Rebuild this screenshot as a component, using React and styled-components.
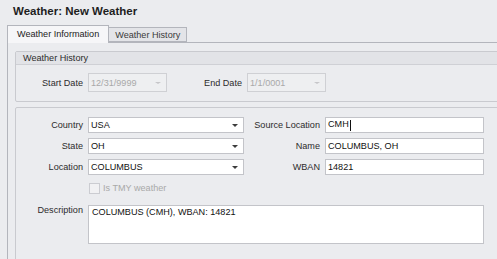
import styled, { createGlobalStyle } from "styled-components";

const GlobalStyle = createGlobalStyle`
  body {
    margin: 0;
    background: #ebecef;
    overflow: hidden;
    font-family: "Liberation Sans", Arial, sans-serif;
    font-size: 9.1px;
    color: #2b2b2b;
  }
`;

const Page = styled.div`
  width: 520px;
  height: 259px;
  overflow: hidden;
`;

const Title = styled.div`
  height: 25px;
  box-sizing: border-box;
  padding: 4px 0 0 13px;
  line-height: 14px;
  font-size: 11.5px;
  font-weight: bold;
  color: #1e1e1e;
`;

const TabStrip = styled.div`
  display: flex;
  align-items: flex-end;
  height: 17px;
  padding-left: 7px;
  position: relative;
  z-index: 1;
`;

const Tab = styled.div`
  box-sizing: border-box;
  height: ${(p) => (p.$active ? "18px" : "15px")};
  margin-bottom: ${(p) => (p.$active ? "-1px" : "0")};
  padding: 0 ${(p) => (p.$active ? "9px" : "6px")};
  line-height: ${(p) => (p.$active ? "16px" : "14px")};
  border: 1px solid #b3b5bc;
  border-bottom: ${(p) => (p.$active ? "none" : "1px solid #b3b5bc")};
  border-left: ${(p) => (p.$active ? "1px solid #b3b5bc" : "none")};
  background: ${(p) => (p.$active ? "#f6f6f8" : "#e3e4e8")};
  color: ${(p) => (p.$active ? "#222" : "#3a3a3a")};
  white-space: nowrap;
`;

const TabPanel = styled.div`
  margin-left: 7px;
  border-left: 1px solid #b3b5bc;
  border-top: 1px solid #b3b5bc;
  padding: 8px 0 0 7px;
  height: 260px;
`;

const Group = styled.div`
  border: 1px solid #c9cacf;
  border-radius: 2px;
  margin-bottom: 5px;
`;

const GroupHeader = styled.div`
  height: 12px;
  line-height: 12px;
  padding-left: 7px;
  background: #e2e3e7;
  border-bottom: 1px solid #cfd0d5;
  color: #2b2b2b;
`;

const DateRow = styled.div`
  display: grid;
  grid-template-columns: 67px 79px 70px 79px;
  column-gap: 5px;
  align-items: center;
  padding: 8px 0 9px;
`;

const FieldGrid = styled.div`
  display: grid;
  grid-template-columns: 67px 156px 71px 159px;
  grid-auto-rows: 16px;
  column-gap: 5px;
  row-gap: 5px;
  padding: 9px 0 40px;
`;

const Label = styled.div`
  text-align: right;
  white-space: nowrap;
  align-self: ${(p) => (p.$top ? "start" : "center")};
  padding-top: ${(p) => (p.$top ? "4px" : "0")};
  color: #2b2b2b;
`;

const Box = styled.div`
  box-sizing: border-box;
  height: ${(p) => (p.$tall ? "19px" : "16px")};
  border: 1px solid ${(p) => (p.$disabled ? "#cfd0d4" : "#c3c4c9")};
  background: ${(p) => (p.$disabled ? "#eeeff1" : "#fff")};
  color: ${(p) => (p.$disabled ? "#a9a9a9" : "#111")};
  display: flex;
  align-items: center;
  padding: 0 5px 0 2px;
  white-space: nowrap;
`;

const BoxText = styled.span`
  flex: 1;
`;

const Caret = styled.span`
  display: inline-block;
  width: 1px;
  height: 11px;
  background: #111;
  vertical-align: middle;
  margin-left: 1px;
`;

const Arrow = styled.span`
  width: 0;
  height: 0;
  border-left: 3px solid transparent;
  border-right: 3px solid transparent;
  border-top: ${(p) => (p.$disabled ? "2px solid #c6c6c9" : "3px solid #3c3c3c")};
`;

const CheckRow = styled.div`
  grid-column: 2 / 5;
  height: 18px;
  margin-top: -1px;
  display: flex;
  align-items: center;
  gap: 3px;
  color: #a9a9a9;
`;

const CheckBox = styled.span`
  box-sizing: border-box;
  width: 11px;
  height: 11px;
  margin-left: 1px;
  border: 1px solid #cbccd1;
  background: #f1f1f3;
`;

const TextArea = styled.div`
  grid-column: 2 / 5;
  grid-row: span 2;
  box-sizing: border-box;
  height: 39px;
  margin-top: 4px;
  border: 1px solid #c3c4c9;
  background: #fff;
  color: #111;
  padding: 1px 3px;
`;

function Combo({ value, disabled, tall }) {
  return (
    <Box $disabled={disabled} $tall={tall}>
      <BoxText>{value}</BoxText>
      <Arrow $disabled={disabled} />
    </Box>
  );
}

export default function App() {
  return (
    <Page>
      <GlobalStyle />
      <Title>Weather: New Weather</Title>
      <TabStrip>
        <Tab $active>Weather Information</Tab>
        <Tab>Weather History</Tab>
      </TabStrip>
      <TabPanel>
        <Group>
          <GroupHeader>Weather History</GroupHeader>
          <DateRow>
            <Label>Start Date</Label>
            <Combo value="12/31/9999" disabled tall />
            <Label>End Date</Label>
            <Combo value="1/1/0001" disabled tall />
          </DateRow>
        </Group>
        <Group>
          <FieldGrid>
            <Label>Country</Label>
            <Combo value="USA" />
            <Label>Source Location</Label>
            <Box>
              <BoxText>
                CMH<Caret />
              </BoxText>
            </Box>

            <Label>State</Label>
            <Combo value="OH" />
            <Label>Name</Label>
            <Box>
              <BoxText>COLUMBUS, OH</BoxText>
            </Box>

            <Label>Location</Label>
            <Combo value="COLUMBUS" />
            <Label>WBAN</Label>
            <Box>
              <BoxText>14821</BoxText>
            </Box>

            <div />
            <CheckRow>
              <CheckBox />
              Is TMY weather
            </CheckRow>

            <Label $top>Description</Label>
            <TextArea>COLUMBUS (CMH), WBAN: 14821</TextArea>
          </FieldGrid>
        </Group>
      </TabPanel>
    </Page>
  );
}
